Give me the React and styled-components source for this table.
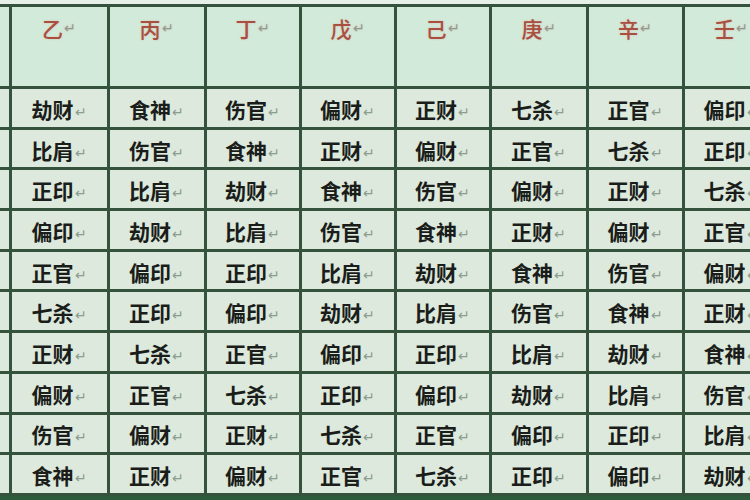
import React from "react";
import styled, { createGlobalStyle } from "styled-components";

const GlobalStyle = createGlobalStyle`
  html, body {
    margin: 0;
    padding: 0;
    background: #2f5b3d;
  }
  body {
    width: 750px;
    height: 500px;
    overflow: hidden;
  }
`;

const Page = styled.div`
  width: 750px;
  height: 500px;
  overflow: hidden;
  background: linear-gradient(#e6f0e8 0 4px, #2f5b3d 4px);
  padding-top: 4px;
  box-sizing: border-box;
  font-family: "Noto Sans CJK SC", "Noto Sans", sans-serif;
`;

const Table = styled.div`
  display: grid;
  grid-template-columns: 11.5px 98px 97px 95px 95px 95px 97px 96px 96px;
  grid-template-rows: 82px repeat(10, 40.7px);
  border-top: 3px solid #34523c;
  width: 790px;
`;

const HeaderCell = styled.div`
  box-sizing: border-box;
  background: #d2eada;
  border-right: 3px solid #34523c;
  border-bottom: 3px solid #34523c;
  display: flex;
  justify-content: center;
  align-items: flex-start;
  padding-top: 6px;
  color: #a8503f;
  font-size: 21px;
  font-weight: 500;
  text-shadow: 0 0 2px rgba(230, 150, 140, 0.6);
`;

const Cell = styled.div`
  box-sizing: border-box;
  background: #dce9dc;
  border-right: 3px solid #34523c;
  border-bottom: 3px solid #34523c;
  display: flex;
  justify-content: center;
  align-items: center;
  color: #1a1d1a;
  font-size: 21px;
  font-weight: 700;
  padding-top: 2px;
`;

const Mark = styled.span`
  color: #8b9c90;
  font-size: 14px;
  font-weight: 400;
  margin-left: 1px;
  margin-top: 4px;
`;

const stems = ["", "乙", "丙", "丁", "戊", "己", "庚", "辛", "壬"];

const rows = [
  ["劫财", "食神", "伤官", "偏财", "正财", "七杀", "正官", "偏印"],
  ["比肩", "伤官", "食神", "正财", "偏财", "正官", "七杀", "正印"],
  ["正印", "比肩", "劫财", "食神", "伤官", "偏财", "正财", "七杀"],
  ["偏印", "劫财", "比肩", "伤官", "食神", "正财", "偏财", "正官"],
  ["正官", "偏印", "正印", "比肩", "劫财", "食神", "伤官", "偏财"],
  ["七杀", "正印", "偏印", "劫财", "比肩", "伤官", "食神", "正财"],
  ["正财", "七杀", "正官", "偏印", "正印", "比肩", "劫财", "食神"],
  ["偏财", "正官", "七杀", "正印", "偏印", "劫财", "比肩", "伤官"],
  ["伤官", "偏财", "正财", "七杀", "正官", "偏印", "正印", "比肩"],
  ["食神", "正财", "偏财", "正官", "七杀", "正印", "偏印", "劫财"],
];

const App = () => {
  return (
    <Page>
      <GlobalStyle />
      <Table>
        {stems.map((stem, i) => (
          <HeaderCell key={"h" + i}>
            {stem && (
              <>
                {stem}
                <Mark>↵</Mark>
              </>
            )}
          </HeaderCell>
        ))}
        {rows.map((row, r) => (
          <React.Fragment key={r}>
            <Cell />
            {row.map((text, c) => (
              <Cell key={c}>
                {text}
                <Mark>↵</Mark>
              </Cell>
            ))}
          </React.Fragment>
        ))}
      </Table>
    </Page>
  );
};

export default App;
